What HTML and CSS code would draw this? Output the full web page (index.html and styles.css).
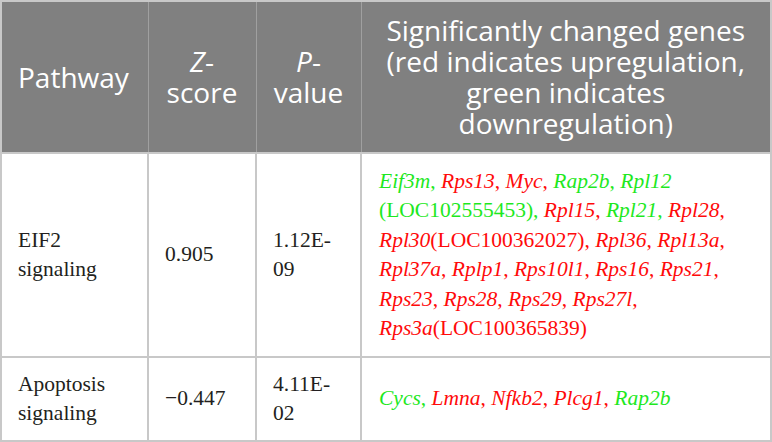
FILE: index.html
```html
<!DOCTYPE html>
<html>
<head>
<meta charset="utf-8">
<link rel="stylesheet" href="styles.css">
</head>
<body>
<table class="tbl">
  <colgroup>
    <col class="c1"><col class="c2"><col class="c3"><col class="c4">
  </colgroup>
  <thead>
    <tr>
      <th class="left">Pathway</th>
      <th><i>Z</i>-<br>score</th>
      <th><i>P</i>-<br>value</th>
      <th>Significantly changed genes<br>(red indicates upregulation,<br>green indicates<br>downregulation)</th>
    </tr>
  </thead>
  <tbody>
    <tr class="r1">
      <td>EIF2<br>signaling</td>
      <td>0.905</td>
      <td>1.12E-<br>09</td>
      <td class="genes"><span class="g"><i>Eif3m</i>,</span> <span class="r"><i>Rps13</i>,</span> <span class="r"><i>Myc</i>,</span> <span class="g"><i>Rap2b</i>,</span> <span class="g"><i>Rpl12</i><br>(LOC102555453),</span> <span class="r"><i>Rpl15</i>,</span> <span class="g"><i>Rpl21</i>,</span> <span class="r"><i>Rpl28</i>,</span><br><span class="r"><i>Rpl30</i>(LOC100362027),</span> <span class="r"><i>Rpl36</i>,</span> <span class="r"><i>Rpl13a</i>,</span><br><span class="r"><i>Rpl37a</i>,</span> <span class="r"><i>Rplp1</i>,</span> <span class="r"><i>Rps10l1</i>,</span> <span class="r"><i>Rps16</i>,</span> <span class="r"><i>Rps21</i>,</span><br><span class="r"><i>Rps23</i>,</span> <span class="r"><i>Rps28</i>,</span> <span class="r"><i>Rps29</i>,</span> <span class="r"><i>Rps27l</i>,</span><br><span class="r"><i>Rps3a</i>(LOC100365839)</span></td>
    </tr>
    <tr class="r2">
      <td>Apoptosis<br>signaling</td>
      <td>&minus;0.447</td>
      <td>4.11E-<br>02</td>
      <td class="genes"><span class="g"><i>Cycs</i>,</span> <span class="r"><i>Lmna</i>,</span> <span class="r"><i>Nfkb2</i>,</span> <span class="r"><i>Plcg1</i>,</span> <span class="g"><i>Rap2b</i></span></td>
    </tr>
  </tbody>
</table>
</body>
</html>
```
FILE: styles.css
```css
html, body {
  margin: 0;
  padding: 0;
  background: #ffffff;
}
.tbl {
  margin: 0;
  width: 772px;
  border-collapse: collapse;
  table-layout: fixed;
  border: 2px solid #c8c8c8;
}
.c1 { width: 147px; }
.c2 { width: 108px; }
.c3 { width: 105px; }
.c4 { width: auto; }
.tbl th {
  background: #808080;
  color: #ffffff;
  font-family: "Open Sans", "Lato", sans-serif;
  font-weight: normal;
  font-size: 28px;
  line-height: 31px;
  text-align: center;
  vertical-align: middle;
  padding: 12px 4px;
  height: 126px;
  border: 1px solid #a0a0a0;
  white-space: nowrap;
}
.tbl th.left {
  text-align: left;
  padding-left: 16px;
}
.tbl td {
  font-family: "Liberation Serif", "DejaVu Serif", serif;
  font-size: 21.5px;
  line-height: 29.5px;
  color: #231f20;
  vertical-align: middle;
  padding: 10px 8px 10px 16px;
  border: 2px solid #c8c8c8;
}
.tbl td.genes {
  padding-left: 17px;
  white-space: nowrap;
}
.r1 td { height: 182px; }
.r2 td { height: 62px; }
.g { color: #1ee81e; }
.r { color: #ff0a0a; }
```
